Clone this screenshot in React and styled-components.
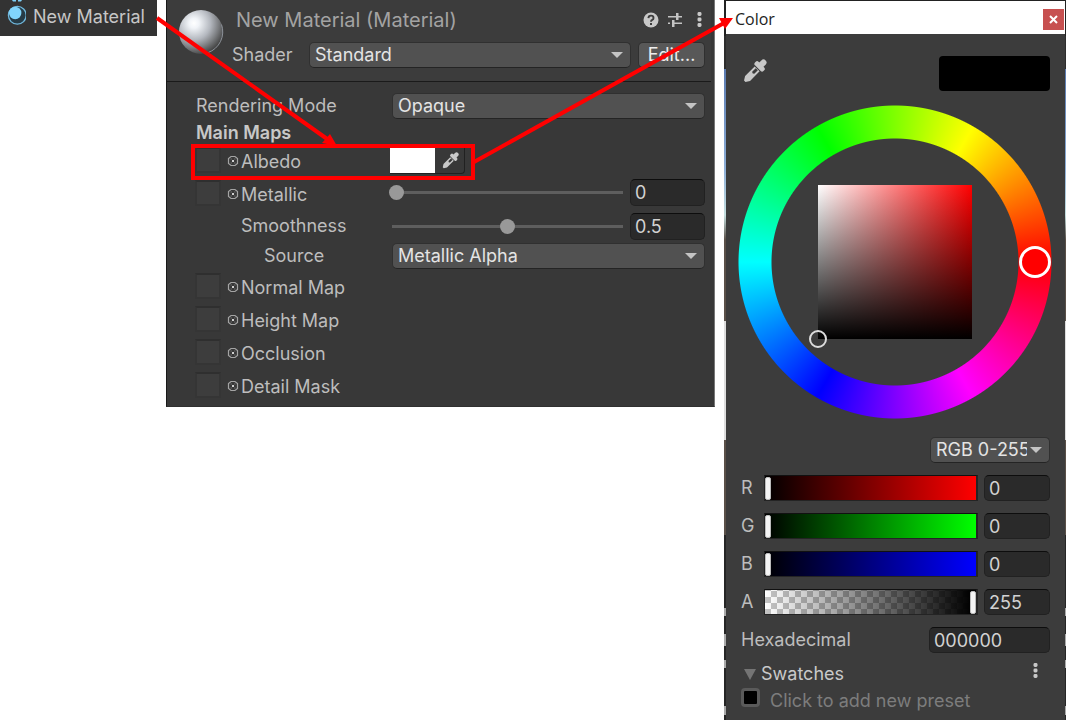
import React from "react";
import styled, { createGlobalStyle } from "styled-components";

const GlobalStyle = createGlobalStyle`
  *, *::before, *::after { box-sizing: border-box; }
  body { margin: 0; background: #fff; }
  button, input, select { font: inherit; color: inherit; margin: 0; }
`;

const Page = styled.main`
  position: relative;
  display: grid;
  grid-template-columns: 157px minmax(0, 1fr) 342px;
  column-gap: 9px;
  align-items: start;
  min-height: 100vh;
  overflow: hidden;
  font: 18px/24px Inter, "Liberation Sans", sans-serif;
  color: #bdbdbd;
`;

const Hierarchy = styled.nav`
  display: flex;
  gap: 7px;
  height: 36px;
  background: #333;
  color: #c6c6c6;
  white-space: nowrap;
`;

const AssetName = styled.span`
  padding-top: 5px;
`;

const Inspector = styled.section`
  background: #383838;
  border-left: 1px solid #191919;
  border-right: 1px solid #777;
  border-bottom: 1px solid #303030;
`;

const InspectorHeader = styled.header`
  display: flex;
  gap: 8px;
  height: 82px;
  padding: 8px 6px 0 11px;
  margin-right: 3px;
  background: #3c3c3c;
  border-bottom: 1px solid #1a1a1a;
`;

const HeaderLines = styled.div`
  flex: 1;
  min-width: 0;
`;

const TitleLine = styled.div`
  display: flex;
  align-items: center;
  gap: 8px;
  height: 23px;
  margin: 0 -2px 11px 0;
  padding-left: 4px;
`;

const Title = styled.h1`
  flex: 1;
  margin: 0;
  font-size: 20px;
  font-weight: 400;
  color: #a3a3a3;
  white-space: nowrap;
`;

const IconButton = styled.button`
  display: flex;
  justify-content: center;
  padding: 0;
  border: 0;
  background: none;
  color: #c4c4c4;
`;

const HeaderButton = styled(IconButton)`
  width: 16px;
`;

const ShaderLine = styled.div`
  display: grid;
  grid-template-columns: 77px minmax(0, 1fr) 74px;
  align-items: center;
`;

const SelectBox = styled.span`
  position: relative;
  display: block;
  flex: 1;
  min-width: 0;
  margin-left: ${(p) => p.$inset || 0}px;
  &::after {
    content: "";
    position: absolute;
    right: 8px;
    top: 10px;
    border: solid transparent;
    border-width: 6px 6px 0;
    border-top-color: #c4c4c4;
  }
`;

const Select = styled.select`
  display: block;
  appearance: none;
  width: 100%;
  height: 26px;
  padding: 0 ${(p) => (p.$compact ? 22 : 26)}px 0 5px;
  border: 1px solid #303030;
  border-bottom-color: #242424;
  border-radius: 5px;
  background: #515151;
  color: #e4e4e4;
  line-height: 24px;
  text-overflow: clip;
`;

const EditButton = styled.button`
  height: 26px;
  margin-left: 7px;
  padding: 0;
  border: 1px solid #303030;
  border-bottom-color: #242424;
  border-radius: 5px;
  background: #585858;
  color: #eee;
  line-height: 22px;
`;

const Properties = styled.div`
  padding: 11px 9px 3px 29px;
`;

const Row = styled.div`
  position: relative;
  display: grid;
  grid-template-columns: 193px minmax(0, 1fr);
  align-items: center;
  height: ${(p) => p.$height || 33}px;
`;

const SectionTitle = styled.h2`
  margin: 0;
  padding-top: 1px;
  font-size: 18px;
  line-height: 25px;
  font-weight: 600;
  color: #c8c8c8;
`;

const LabelCell = styled.div`
  display: flex;
  align-items: center;
  height: 100%;
  padding-left: ${(p) => p.$indent || 0}px;
  white-space: nowrap;
`;

const TextureSlot = styled.button`
  align-self: flex-start;
  width: 26px;
  height: 26px;
  margin: 2px 5px 0 -1px;
  padding: 0;
  border: 2px solid #353535;
  border-top-color: #2f2f2f;
  background: #3d3d3d;
`;

const TargetButton = styled(IconButton)`
  width: 12px;
  margin: 0 2px 1px 1px;
`;

const Control = styled.div`
  display: flex;
  align-items: center;
  gap: 4px;
  margin-bottom: ${(p) => p.$lift || 0}px;
`;

const Slider = styled.input`
  appearance: none;
  flex: 1;
  min-width: 0;
  height: 16px;
  background: linear-gradient(#5e5e5e, #5e5e5e) center / calc(100% - 6px) 3px no-repeat;
  &::-webkit-slider-thumb {
    appearance: none;
    width: 15px;
    height: 15px;
    border-radius: 50%;
    background: #999;
  }
`;

const Field = styled.input`
  width: ${(p) => p.$width}px;
  height: ${(p) => p.$height || 26}px;
  padding: 0 4px;
  border: 1px solid #212121;
  border-top-color: #0d0d0d;
  border-radius: 5px;
  background: #2a2a2a;
  color: #d2d2d2;
`;

const Highlight = styled.div`
  position: absolute;
  top: -1px;
  left: -5px;
  width: 284px;
  height: 36px;
  border: 4px solid #f00;
  pointer-events: none;
`;

const ColorField = styled.div`
  display: flex;
  height: 26px;
  margin-left: 1px;
  border-right: 1px solid #212121;
  border-bottom: 1px solid #212121;
  border-radius: 0 0 4px 0;
`;

const ColorSwatch = styled.button`
  width: 45px;
  padding: 0;
  border: 0;
  background: #fff;
`;

const PickerButton = styled(IconButton)`
  width: 29px;
  padding: 4px 0 0 2px;
`;

const ColorWindow = styled.section`
  min-height: 720px;
  padding: 1px 1px 0 2px;
  background: linear-gradient(
    #222 0 36px, #2d2d2d 36px 69px, #5a7ab0 69px, #8fb0d8 170px, #c4dede 215px,
    #5a5048 240px 321px, #ddd 321px 440px, #5a5048 440px 535px, #262626 535px 608px,
    #aaa 608px 616px, #262626 616px 634px, #aaa 634px 646px, #262626 646px 660px,
    #aaa 660px 668px, #262626 668px 706px, #aaa 706px 715px, #262626 715px
  );
`;

const TitleBar = styled.header`
  display: flex;
  justify-content: space-between;
  align-items: center;
  height: 33px;
  padding: 2px 1px 0 9px;
  background: #fff;
  color: #222;
  font: 16px/24px "Open Sans", sans-serif;
`;

const WindowTitle = styled.h2`
  margin: 0;
  font-size: 16px;
  font-weight: 400;
`;

const CloseButton = styled.button`
  display: grid;
  place-items: center;
  width: 21px;
  height: 21px;
  margin-top: 2px;
  padding: 0;
  border: 0;
  background: #c75050;
`;

const Picker = styled.div`
  min-height: 686px;
  padding: 22px 15px 0;
  background: #3c3c3c;
`;

const PreviewLine = styled.div`
  display: flex;
  justify-content: space-between;
  height: 35px;
  padding: 3px 0 0 2px;
`;

const Preview = styled.div`
  width: 111px;
  height: 35px;
  margin-top: -3px;
  border-radius: 4px;
  background: #000;
`;

const WheelArea = styled.div`
  position: relative;
  display: grid;
  place-items: center;
  width: 314px;
  height: 314px;
  margin: 14px 0 18px -3px;
`;

const HueRing = styled.div`
  grid-area: 1 / 1;
  width: 100%;
  height: 100%;
  background: conic-gradient(from 90deg, #f00, #f0f, #00f, #0ff, #0f0, #ff0, #f00);
  mask: radial-gradient(circle, transparent 123px, #000 124px, #000 156px, transparent 157px);
`;

const Saturation = styled.div`
  grid-area: 1 / 1;
  position: relative;
  width: 154px;
  height: 154px;
  background: linear-gradient(transparent, #000), linear-gradient(90deg, #fff, #f00);
`;

const HueHandle = styled.div`
  position: absolute;
  right: 1px;
  top: 141px;
  width: 32px;
  height: 32px;
  border: 3px solid #fff;
  border-radius: 50%;
  background: #f00;
`;

const SaturationHandle = styled.div`
  position: absolute;
  left: -9px;
  bottom: -9px;
  width: 18px;
  height: 18px;
  border: 2px solid #ddd;
  border-radius: 50%;
`;

const ModeLine = styled.div`
  display: flex;
  width: 120px;
  margin: 0 0 12px auto;
`;

const ChannelRow = styled.div`
  display: grid;
  grid-template-columns: 23px minmax(0, 1fr) 66px;
  height: 26px;
  margin-bottom: 12px;
  align-items: center;
`;

const ChannelSlider = styled.input`
  appearance: none;
  width: calc(100% - 6px);
  height: 26px;
  border: 1px solid #242424;
  border-top-color: #111;
  border-right-width: 2px;
  background: ${(p) => p.$track};
  &::-webkit-slider-thumb {
    appearance: none;
    width: 6px;
    height: 23px;
    border: 1px solid #bbb;
    border-radius: 2px;
    background: #f4f4f4;
  }
`;

const HexRow = styled.div`
  display: flex;
  justify-content: space-between;
  align-items: center;
  height: 26px;
`;

const SwatchesLine = styled.div`
  display: flex;
  justify-content: space-between;
  margin: 9px 12px 0 3px;
`;

const Foldout = styled.button`
  display: flex;
  align-items: center;
  gap: 5px;
  padding: 0;
  border: 0;
  background: none;
  color: #c9c9c9;
  &::before {
    content: "";
    border: solid transparent;
    border-width: 11px 6px 0;
    border-top-color: #747474;
  }
`;

const PresetButton = styled.button`
  display: flex;
  align-items: center;
  gap: 10px;
  margin-top: 2px;
  padding: 0;
  border: 0;
  background: none;
  color: #7d7d7d;
`;

const PresetColor = styled.span`
  width: 19px;
  height: 19px;
  margin-bottom: 6px;
  border: 3px solid #5a5a5a;
  border-radius: 4px;
  background: #000;
`;

const Annotations = styled.svg`
  position: absolute;
  top: 0;
  left: 0;
  width: 100%;
  height: 720px;
  pointer-events: none;
`;

const Eyedropper = ({ size }) => (
  <svg width={size} height={size} viewBox="0 0 24 24" aria-hidden="true">
    <g transform="rotate(45 12 12)" fill="#c8c8c8">
      <rect x="9" y="-3" width="6" height="9" rx="3" />
      <rect x="6" y="3" width="12" height="5" rx="2" />
      <path fillRule="evenodd" d="M8.5 9h7v13.5L13 26.5h-2L8.5 22.5zM10.5 9.5v5q1.5 1.8 3 0v-5z" />
    </g>
  </svg>
);

const Dots = () => (
  <svg width="5" height="17" viewBox="0 0 5 17" fill="#c8c8c8" aria-hidden="true">
    <rect x="0.5" y="1" width="4" height="4" rx="1.4" />
    <rect x="0.5" y="6.5" width="4" height="4" rx="1.4" />
    <rect x="0.5" y="12" width="4" height="4" rx="1.4" />
  </svg>
);

const HelpIcon = () => (
  <svg width="16" height="16" viewBox="0 0 16 16" aria-hidden="true">
    <circle cx="8" cy="8" r="7.5" fill="#c8c8c8" />
    <path d="M5.4 6.1Q5.5 3.6 8 3.6t2.5 2.3Q10.500 7.200 9.200 7.900Q8 8.500 8 9.700" fill="none" stroke="#3c3c3c" strokeWidth="1.9" />
    <rect x="7" y="11" width="2" height="2" fill="#3c3c3c" />
  </svg>
);

const PresetIcon = () => (
  <svg width="16" height="16" viewBox="0 0 16 16" fill="#c4c4c4" aria-hidden="true">
    <path d="M1 4h8v1.500H1zM9 1h2.500v7H9zM11.500 4H15v1.500h-3.500zM1 10.500h2V12H1zM5 8h2.500v7H5zM7.500 10.500H15V12H7.500z" />
  </svg>
);

const TargetIcon = () => (
  <svg width="12" height="12" viewBox="0 0 12 12" aria-hidden="true">
    <path d="M4 1.500h4L10.500 3.500v5L8 10.500H4L1.500 8.500v-5z" fill="none" stroke="#a4a4a4" strokeWidth="1.200" />
    <rect x="5" y="5" width="2" height="2" fill="#d0d0d0" />
    <path d="M3.500 4h1.500M7 4h1.500M3.500 8h1.500M7 8h1.500" stroke="#6c6c6c" />
  </svg>
);

const MaterialIcon = () => (
  <svg width="26" height="36" viewBox="0 0 26 36" aria-hidden="true">
    <path d="M12 0h4v1.500h-3zM18 0h4l-1 1.500h-3z" fill="#7fd0f8" />
    <circle cx="17.300" cy="15.300" r="8.900" fill="#263b46" stroke="#6fb7dc" strokeWidth="1.300" />
    <circle cx="15.200" cy="13" r="6.200" fill="#81d4fb" />
  </svg>
);

const MaterialSphere = () => (
  <svg width="46" height="48" viewBox="0 0 46 48" aria-hidden="true">
    <defs>
      <radialGradient id="sphere" cx="0.34" cy="0.3" r="0.75">
        <stop offset="0" stopColor="#fff" />
        <stop offset="0.15" stopColor="#f1f4f8" />
        <stop offset="0.5" stopColor="#b4b8bf" />
        <stop offset="0.75" stopColor="#7b7d80" />
        <stop offset="1" stopColor="#3e3e3e" />
      </radialGradient>
    </defs>
    <circle cx="23" cy="24" r="22" fill="url(#sphere)" />
    <path d="M43.500 16.500A22 22 0 0 1 30 44.600" fill="none" stroke="#8c9199" strokeWidth="1" />
  </svg>
);

const Dropdown = ({ id, label, value, inset, compact }) => (
  <SelectBox $inset={inset}>
    <Select id={id} aria-label={label} $compact={compact} defaultValue={value}>
      <option>{value}</option>
    </Select>
  </SelectBox>
);

const MapLabel = ({ name }) => (
  <LabelCell>
    <TextureSlot aria-label={`${name} texture`} />
    <TargetButton aria-label={`Select ${name} texture`}>
      <TargetIcon />
    </TargetButton>
    <span>{name}</span>
  </LabelCell>
);

const CHECKER = "repeating-conic-gradient(#c4c4c4 0 25%, #fff 0 50%) 0 1px / 12px 12px";

const CHANNELS = [
  { name: "R", value: 0, track: "linear-gradient(90deg, #000, #f00)" },
  { name: "G", value: 0, track: "linear-gradient(90deg, #000, #0f0)" },
  { name: "B", value: 0, track: "linear-gradient(90deg, #000, #00f)" },
  { name: "A", value: 255, track: `linear-gradient(90deg, transparent, #000 98%), ${CHECKER}` },
];

export default function App() {
  return (
    <Page>
      <GlobalStyle />

      <Hierarchy aria-label="Assets">
        <MaterialIcon />
        <AssetName>New Material</AssetName>
      </Hierarchy>

      <Inspector>
        <InspectorHeader>
          <MaterialSphere />
          <HeaderLines>
            <TitleLine>
              <Title>New Material (Material)</Title>
              <HeaderButton aria-label="Help"><HelpIcon /></HeaderButton>
              <HeaderButton aria-label="Presets"><PresetIcon /></HeaderButton>
              <HeaderButton aria-label="More"><Dots /></HeaderButton>
            </TitleLine>
            <ShaderLine>
              <label htmlFor="shader">Shader</label>
              <Dropdown id="shader" value="Standard" />
              <EditButton>Edit...</EditButton>
            </ShaderLine>
          </HeaderLines>
        </InspectorHeader>

        <Properties>
          <Row $height={26}>
            <LabelCell as="label" htmlFor="mode">Rendering Mode</LabelCell>
            <Dropdown id="mode" value="Opaque" inset={3} />
          </Row>
          <SectionTitle>Main Maps</SectionTitle>
          <Row>
            <MapLabel name="Albedo" />
            <Control $lift={2}>
              <ColorField>
                <ColorSwatch aria-label="Albedo color" />
                <PickerButton aria-label="Pick albedo color"><Eyedropper size={17} /></PickerButton>
              </ColorField>
            </Control>
            <Highlight />
          </Row>
          <Row>
            <MapLabel name="Metallic" />
            <Control $lift={4}>
              <Slider type="range" min="0" max="1" step="0.01" defaultValue="0" aria-label="Metallic slider" />
              <Field $width={75} $height={27} defaultValue="0" aria-label="Metallic" />
            </Control>
          </Row>
          <Row $height={30}>
            <LabelCell as="label" htmlFor="smoothness" $indent={45}>Smoothness</LabelCell>
            <Control>
              <Slider type="range" min="0" max="1" step="0.01" defaultValue="0.5" aria-label="Smoothness slider" />
              <Field id="smoothness" $width={75} $height={27} defaultValue="0.5" />
            </Control>
          </Row>
          <Row $height={30}>
            <LabelCell as="label" htmlFor="source" $indent={68}>Source</LabelCell>
            <Dropdown id="source" value="Metallic Alpha" inset={3} />
          </Row>
          {["Normal Map", "Height Map", "Occlusion", "Detail Mask"].map((name) => (
            <Row key={name}>
              <MapLabel name={name} />
            </Row>
          ))}
        </Properties>
      </Inspector>

      <ColorWindow>
        <TitleBar>
          <WindowTitle>Color</WindowTitle>
          <CloseButton aria-label="Close">
            <svg width="9" height="9" viewBox="0 0 9 9" aria-hidden="true">
              <path d="M1 1l7 7M8 1L1 8" stroke="#fff" strokeWidth="2" />
            </svg>
          </CloseButton>
        </TitleBar>
        <Picker>
          <PreviewLine>
            <IconButton aria-label="Pick color"><Eyedropper size={24} /></IconButton>
            <Preview />
          </PreviewLine>
          <WheelArea>
            <HueRing />
            <Saturation>
              <SaturationHandle />
            </Saturation>
            <HueHandle />
          </WheelArea>
          <ModeLine>
            <Dropdown label="Color mode" value="RGB 0-255" compact />
          </ModeLine>
          {CHANNELS.map(({ name, value, track }) => (
            <ChannelRow key={name}>
              <label htmlFor={`channel-${name}`}>{name}</label>
              <ChannelSlider type="range" min="0" max="255" defaultValue={value} $track={track} aria-label={`${name} slider`} />
              <Field id={`channel-${name}`} $width={66} defaultValue={value} />
            </ChannelRow>
          ))}
          <HexRow>
            <label htmlFor="hex">Hexadecimal</label>
            <Field id="hex" $width={121} defaultValue="000000" />
          </HexRow>
          <SwatchesLine>
            <Foldout>Swatches</Foldout>
            <IconButton aria-label="Swatch options"><Dots /></IconButton>
          </SwatchesLine>
          <PresetButton>
            <PresetColor />
            Click to add new preset
          </PresetButton>
        </Picker>
      </ColorWindow>

      <Annotations viewBox="0 0 1066 720" preserveAspectRatio="none" aria-hidden="true">
        <g stroke="#f00" strokeWidth="4">
          <path d="M157 18L330 141" />
          <path d="M474 162L724 23" />
        </g>
        <g fill="#f00">
          <path d="M337 146L322 143L330 134z" />
          <path d="M733 18L719 18L725 29z" />
        </g>
      </Annotations>
    </Page>
  );
}
